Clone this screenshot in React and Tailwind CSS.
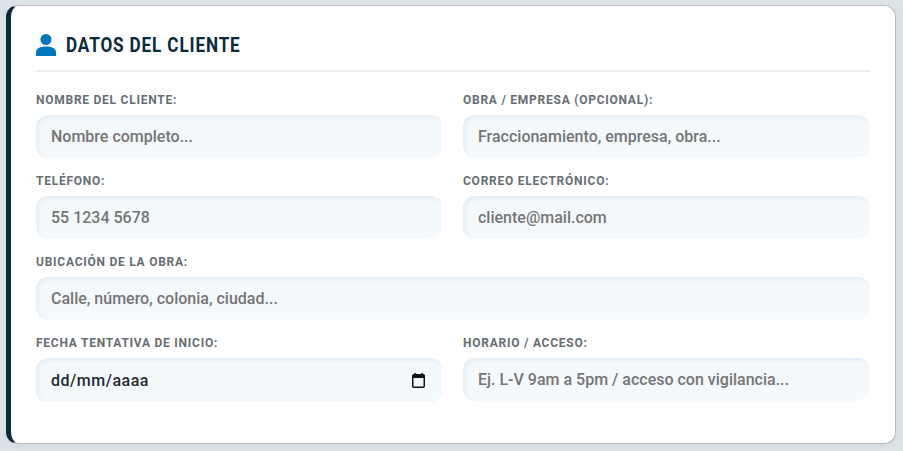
const fields = [
  { label: "NOMBRE DEL CLIENTE:", placeholder: "Nombre completo..." },
  { label: "OBRA / EMPRESA (OPCIONAL):", placeholder: "Fraccionamiento, empresa, obra..." },
  { label: "TELÉFONO:", placeholder: "55 1234 5678" },
  { label: "CORREO ELECTRÓNICO:", placeholder: "cliente@mail.com" },
  { label: "UBICACIÓN DE LA OBRA:", placeholder: "Calle, número, colonia, ciudad...", wide: true },
  { label: "FECHA TENTATIVA DE INICIO:", type: "date" },
  { label: "HORARIO / ACCESO:", placeholder: "Ej. L-V 9am a 5pm / acceso con vigilancia..." },
];

const boxClass =
  "w-full rounded-[12px] bg-[#f4f9fc] px-[15px] text-[16px] leading-[19px] font-medium shadow-[inset_2px_2px_5px_rgba(0,90,160,0.08),inset_-1px_-1px_3px_rgba(255,255,255,0.7)] outline-none";

// the browser here prints the date in its own locale, so the dd/mm/aaaa field is drawn by hand
function DateBox() {
  return (
    <div className={boxClass + " flex h-[45px] items-center justify-between pr-[18px] text-[#1f2a33]"}>
      <span className="tracking-[0.5px]">dd/mm/aaaa</span>
      <svg width="13" height="15" viewBox="0 0 13 15" fill="none">
        <path d="M3 0v2M10 0v2" stroke="#111" strokeWidth="1.5" />
        <rect x="0.75" y="1.75" width="11.5" height="12.5" rx="1" stroke="#111" strokeWidth="1.5" />
        <rect x="1" y="2" width="11" height="3" fill="#111" />
      </svg>
    </div>
  );
}

function Field({ label, placeholder, type = "text", wide }) {
  return (
    <div className={wide ? "col-span-2 flex flex-col" : "flex flex-col"}>
      <label className="mb-[8px] h-[13px] text-[12px] leading-[13px] font-bold tracking-[0.75px] text-[#666e73]">
        {label}
      </label>
      {type === "date" ? (
        <DateBox />
      ) : (
        <input
          type={type}
          placeholder={placeholder}
          className={boxClass + " h-[43px] text-[#1f2a33] placeholder:text-[#757575]"}
        />
      )}
    </div>
  );
}

export default function App() {
  return (
    <div lang="es" className="h-[451px] w-[903px] overflow-hidden bg-[#dce3e6] pt-[5px] pl-[6px] font-['Roboto',sans-serif]">
      <div className="h-[439px] w-[890px] rounded-[12px] border border-l-[5px] border-[#b4bcc2] border-l-[#0a2b3c] bg-white pt-[24px] pr-[25px] pl-[25px] shadow-[0_2px_6px_rgba(0,0,0,0.04)]">
        <div className="flex h-[42px] items-start gap-[10px] border-b-2 border-[#eeeeee]">
          <svg width="20" height="22" viewBox="0 0 20 22" className="mt-[4px]" fill="#0077bd">
            <circle cx="10" cy="5.5" r="5.5" />
            <path d="M0 22v-3.5C0 14.5 4 12.5 10 12.5s10 2 10 6V22z" />
          </svg>
          <h2 className="mt-[4px] origin-left scale-x-[0.857] text-[20px] leading-[22px] font-bold tracking-[1px] whitespace-nowrap text-[#0a2b3c]">
            DATOS DEL CLIENTE
          </h2>
        </div>
        <div className="mt-[22px] grid grid-cols-2 items-start gap-x-[20px] gap-y-[17px]">
          {fields.map((f) => (
            <Field key={f.label} {...f} />
          ))}
        </div>
      </div>
    </div>
  );
}
